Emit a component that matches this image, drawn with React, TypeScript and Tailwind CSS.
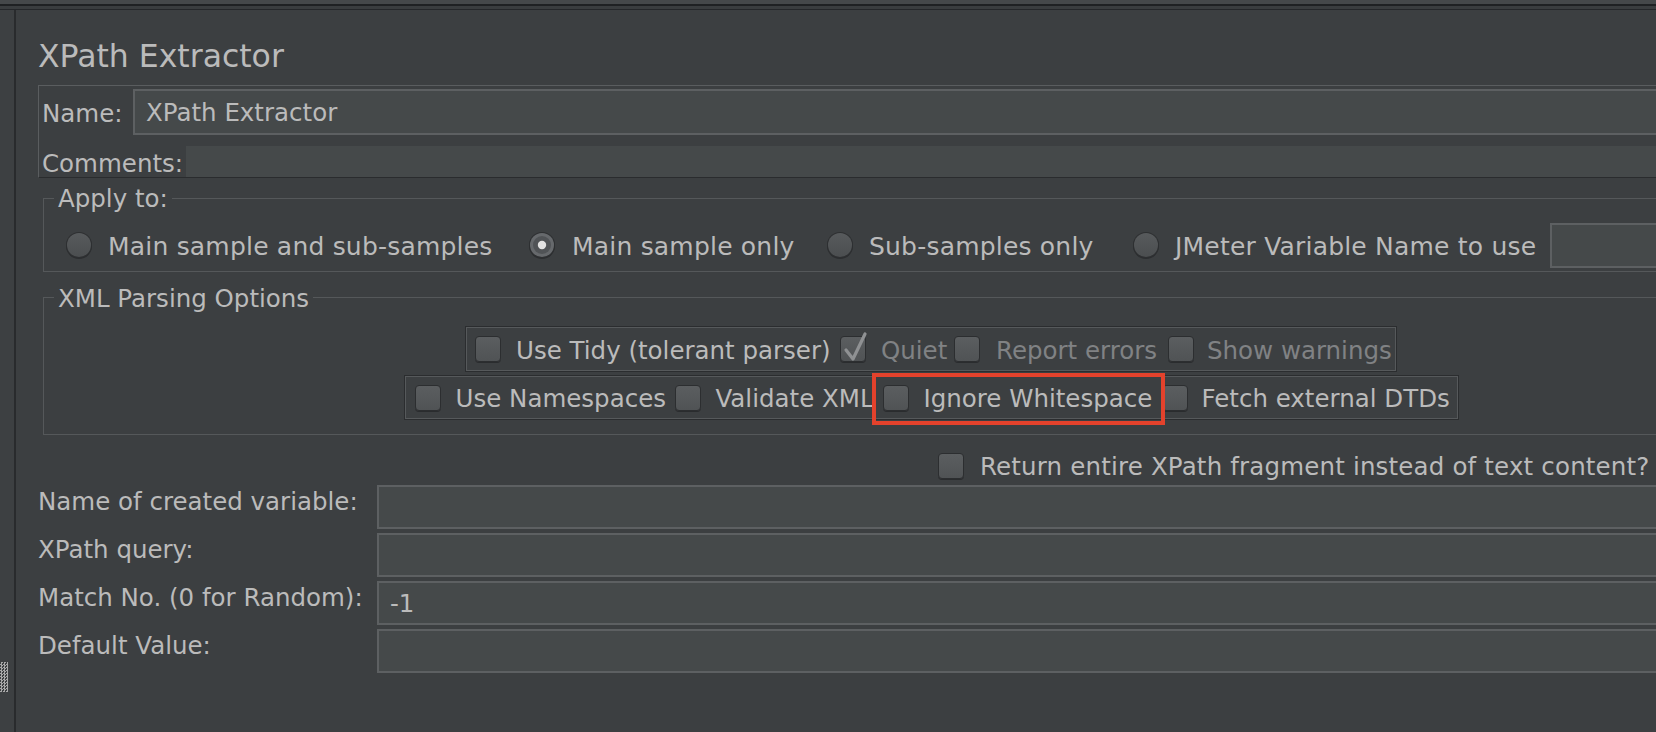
import React from "react";

function CheckBox({ checked = false }: { checked?: boolean }) {
  return (
    <span className="relative shrink-0 w-[26px] h-[26px] rounded-[4px] border border-[#2c2e30] bg-gradient-to-b from-[#5b5e60] to-[#505355] shadow-[0_1px_0_#2a2c2e]">
      {checked && (
        <svg
          className="absolute left-0 top-0 overflow-visible"
          width="26"
          height="26"
          viewBox="0 0 26 26"
        >
          <path
            d="M5 13 L12 22 L24 -3"
            fill="none"
            stroke="#8f9193"
            strokeWidth="3.2"
            strokeLinecap="round"
            strokeLinejoin="round"
          />
        </svg>
      )}
    </span>
  );
}

function Radio({ selected = false }: { selected?: boolean }) {
  return (
    <svg width="28" height="28" viewBox="0 0 28 28" className="shrink-0">
      <defs>
        <linearGradient id="rg" x1="0" y1="0" x2="0" y2="1">
          <stop offset="0" stopColor="#575a5c" />
          <stop offset="1" stopColor="#4b4e50" />
        </linearGradient>
      </defs>
      <circle cx="14" cy="15" r="13" fill="#2c2e30" />
      <circle cx="14" cy="14" r="13" fill="#2e3032" />
      <circle cx="14" cy="14" r="12" fill={selected ? "#66696c" : "url(#rg)"} />
      {selected && (
        <>
          <circle cx="14" cy="14" r="9" fill="#505356" />
          <circle cx="14" cy="14" r="4.2" fill="#e2e2e2" />
        </>
      )}
    </svg>
  );
}

const fieldCls = "border-2 border-[#5d6062] bg-[#45494a]";

export default function App() {
  const lower: { label: string; value?: string }[] = [
    { label: "Name of created variable:" },
    { label: "XPath query:" },
    { label: "Match No. (0 for Random):", value: "-1" },
    { label: "Default Value:" },
  ];

  return (
    <div className="w-[1656px] h-[732px] overflow-hidden bg-[#3c3f41] flex flex-col font-['DejaVu_Sans',sans-serif] text-[24.5px] text-[#bbbbbb]">
      <div className="h-[4px] shrink-0 bg-[#45484a]" />
      <div className="h-[2px] shrink-0 bg-[#1f2123]" />
      <div className="h-[3px] shrink-0 bg-[#3a3d3f]" />
      <div className="h-[1px] shrink-0 bg-[#25272a]" />
      <div className="flex flex-1 min-h-0">
        <div className="w-[14px] shrink-0 bg-[#3d4042] pt-[652px]">
          <div className="w-[8px] h-[30px] bg-[repeating-conic-gradient(#a8a8a8_0%_25%,#3c3f41_0%_50%)] bg-[length:3px_3px]" />
        </div>
        <div className="w-[2px] shrink-0 bg-[#292b2d]" />
        <div className="flex-1 min-w-0 pl-[22px]">
          <div className="w-[1786px]">
            <div className="mt-[30px] h-[32px] leading-[32px] text-[31.5px] whitespace-nowrap">
              XPath Extractor
            </div>

            <div className="mt-[13px] border border-[#5a5d5f] border-b-[#2a2c2e] pl-[3px] pt-[3px]">
              <div className="flex items-center h-[46px]">
                <span className="w-[91px] shrink-0 whitespace-nowrap pt-[5px]">Name:</span>
                <div className={`flex-1 h-[46px] ${fieldCls} pl-[11px] pt-[3px] flex items-center whitespace-nowrap`}>
                  XPath Extractor
                </div>
              </div>
              <div className="flex mt-[11px] h-[31px]">
                <span className="w-[144px] shrink-0 whitespace-nowrap leading-[31px] pt-[2px]">
                  Comments:
                </span>
                <div className="flex-1 bg-[#45494a]" />
              </div>
            </div>

            <fieldset className="mt-[5px] mx-[5px] border border-[#55585a] px-[10px] pb-[3px]">
              <legend className="px-[4px] leading-[28px] pt-[2px] whitespace-nowrap">Apply to:</legend>
              <div className="flex items-center h-[46px] mt-[9px] pl-[11px] whitespace-nowrap text-[25px] tracking-[0.2px]">
                <Radio />
                <span className="ml-[15px] w-[384px] shrink-0 pt-[3px]">Main sample and sub-samples</span>
                <span className="ml-[36px] flex">
                  <Radio selected />
                </span>
                <span className="ml-[16px] w-[219px] shrink-0 pt-[3px]">Main sample only</span>
                <span className="ml-[35px] flex">
                  <Radio />
                </span>
                <span className="ml-[15px] w-[228px] shrink-0 pt-[3px]">Sub-samples only</span>
                <span className="ml-[35px] flex">
                  <Radio />
                </span>
                <span className="ml-[15px] w-[352px] shrink-0 pt-[3px]">JMeter Variable Name to use</span>
                <div className={`ml-[23px] w-[260px] h-[45px] shrink-0 ${fieldCls}`} />
              </div>
            </fieldset>

            <fieldset className="mt-[10px] mx-[5px] border border-[#55585a] px-[10px] pb-[14px]">
              <legend className="px-[4px] leading-[28px] pt-[3px] whitespace-nowrap">XML Parsing Options</legend>
              <div className="mt-[13px] mx-auto w-[932px] h-[46px] border border-[#2b2d2f] shadow-[inset_0_0_0_1px_#56595b] flex items-center pl-[9px] whitespace-nowrap">
                <CheckBox />
                <span className="ml-[15px] w-[316px] shrink-0 pt-[4px]">Use Tidy (tolerant parser)</span>
                <span className="ml-[8px] flex">
                  <CheckBox checked />
                </span>
                <span className="ml-[15px] w-[66px] shrink-0 pt-[4px] text-[#808284]">Quiet</span>
                <span className="ml-[7px] flex">
                  <CheckBox />
                </span>
                <span className="ml-[16px] w-[161px] shrink-0 pt-[4px] text-[#808284]">Report errors</span>
                <span className="ml-[11px] flex">
                  <CheckBox />
                </span>
                <span className="ml-[13px] w-[186px] shrink-0 pt-[4px] text-[#808284]">Show warnings</span>
              </div>
              <div className="relative mt-[3px] mx-auto w-[1055px] h-[45px] border border-[#2b2d2f] shadow-[inset_0_0_0_1px_#56595b] flex items-center pl-[10px] whitespace-nowrap">
                <CheckBox />
                <span className="ml-[15px] w-[209px] shrink-0 pt-[4px]">Use Namespaces</span>
                <span className="ml-[10px] flex">
                  <CheckBox />
                </span>
                <span className="ml-[15px] w-[156px] shrink-0 pt-[4px]">Validate XML</span>
                <span className="ml-[11px] flex">
                  <CheckBox />
                </span>
                <span className="ml-[15px] w-[229px] shrink-0 pt-[4px]">Ignore Whitespace</span>
                <span className="ml-[9px] flex">
                  <CheckBox />
                </span>
                <span className="ml-[14px] w-[254px] shrink-0 pt-[4px]">Fetch external DTDs</span>
                <div className="absolute left-[467px] top-[-3px] w-[293px] h-[52px] border-4 border-[#e4422c] pointer-events-none" />
              </div>
            </fieldset>

            <div className="mt-[17px] h-[27px] flex items-center pl-[900px] whitespace-nowrap">
              <CheckBox />
              <span className="ml-[16px] pt-[4px] tracking-[0.17px]">
                Return entire XPath fragment instead of text content?
              </span>
            </div>

            <div className="mt-[6px] flex flex-col gap-[4px]">
              {lower.map((r) => (
                <div key={r.label} className="flex h-[44px]">
                  <span className="w-[339px] shrink-0 pt-[3px] leading-[28px] whitespace-nowrap">
                    {r.label}
                  </span>
                  <div className={`flex-1 ${fieldCls} pl-[11px] pt-[3px] flex items-center`}>
                    {r.value ?? ""}
                  </div>
                </div>
              ))}
            </div>
          </div>
        </div>
      </div>
    </div>
  );
}
